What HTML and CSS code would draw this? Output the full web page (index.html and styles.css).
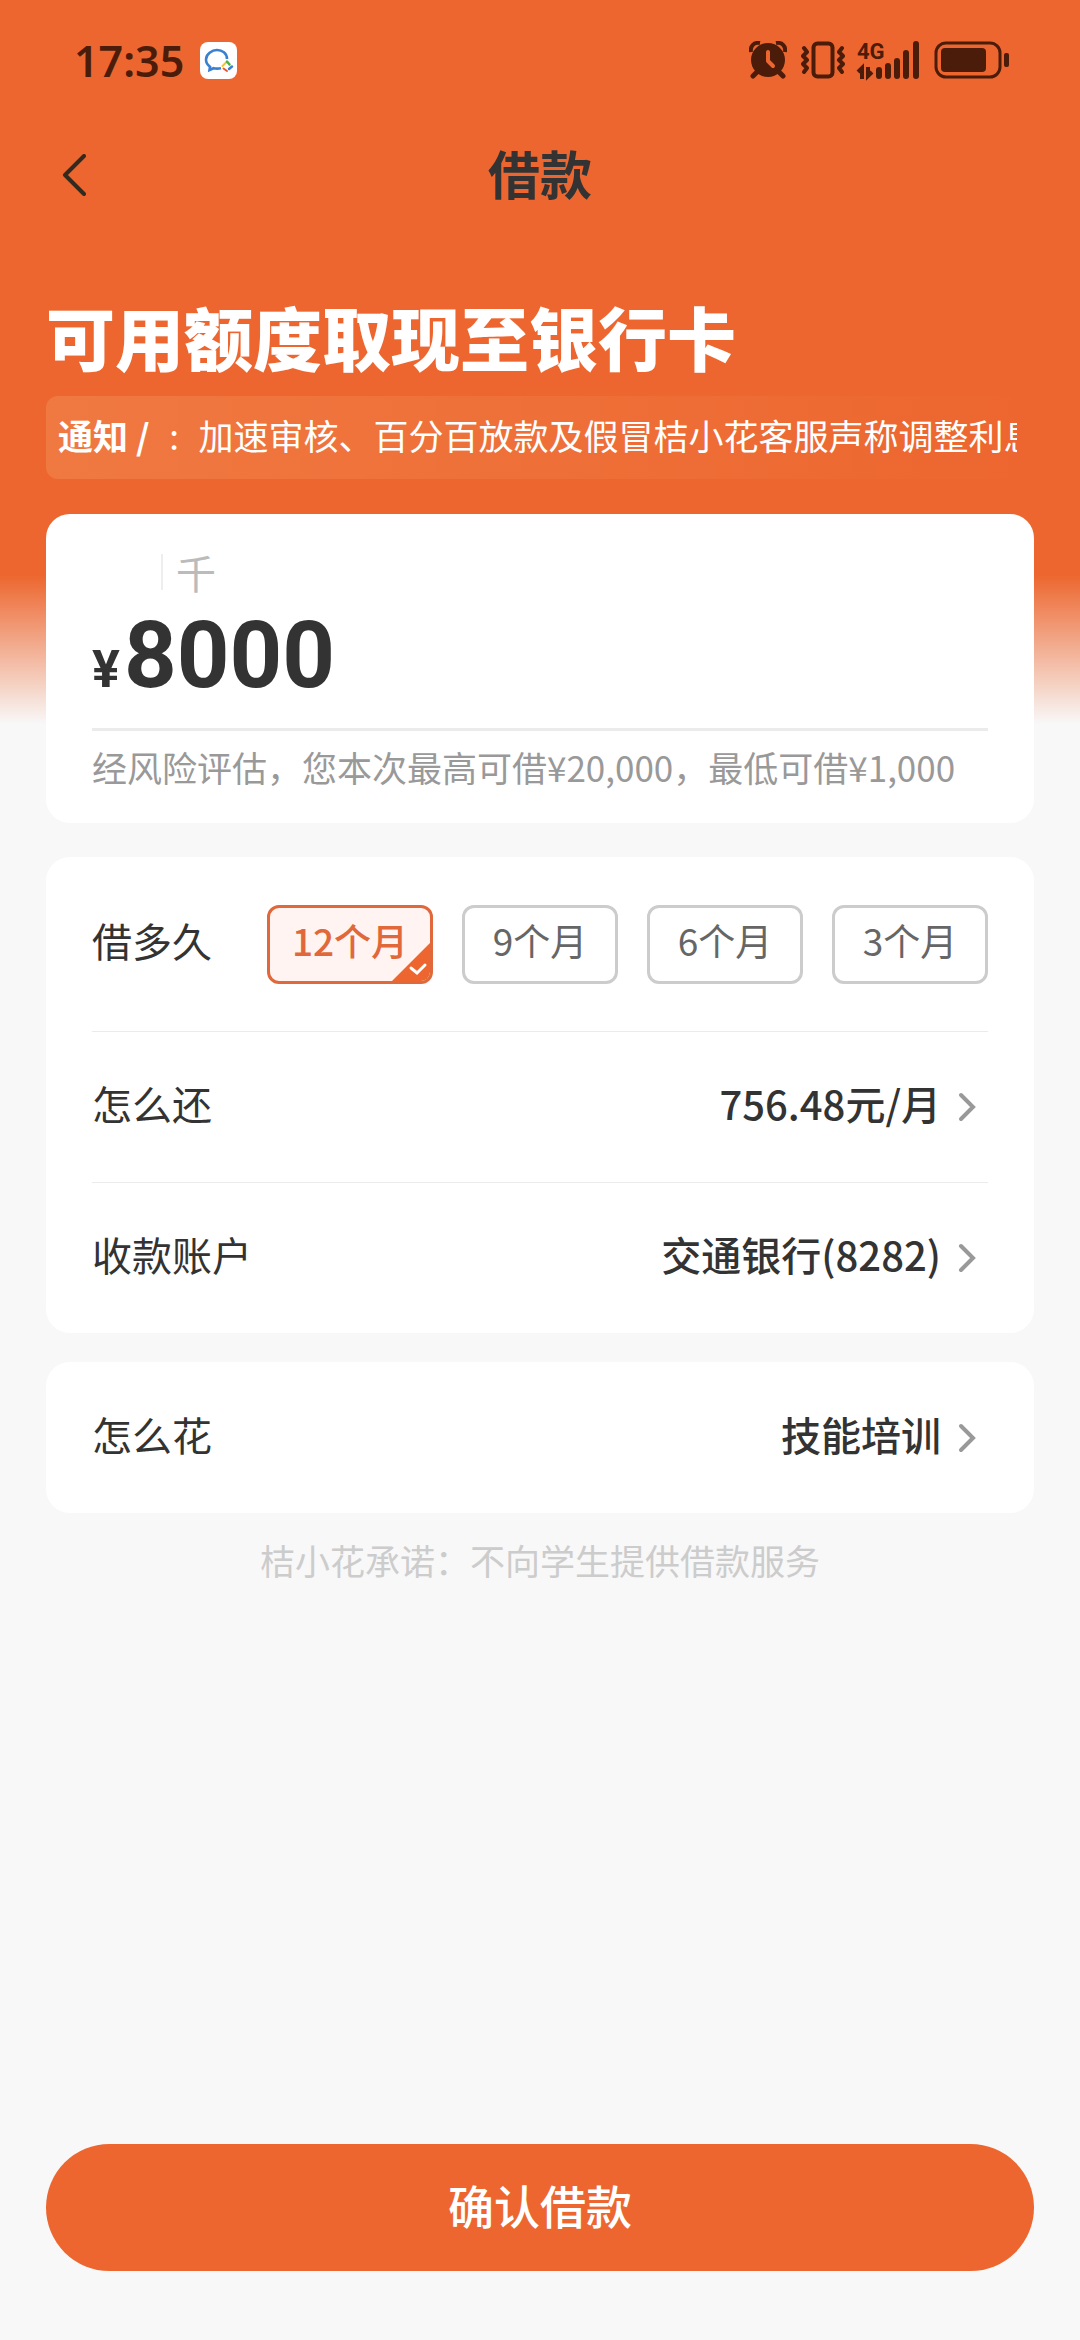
FILE: index.html
```html
<!DOCTYPE html>
<html lang="zh-CN">
<head>
  <meta charset="UTF-8">
  <meta name="viewport" content="width=device-width, initial-scale=1.0">
  <title>借款</title>
  <link rel="stylesheet" href="styles.css">
</head>
<body>

<div class="page">
  <!-- Status bar -->
  <div class="status-bar">
    <span class="status-time">17:35</span>
    <svg class="status-app" width="37" height="37" viewBox="0 0 37 37">
      <rect width="37" height="37" rx="8" fill="#fff"/>
      <path d="M27 17c0-6-5-9-10-9S6 12 6 17.500c0 3 1.500 5.500 4 7.200L9.500 28l4-1.800c2.500.6 5 .5 7.500 0" fill="none" stroke="#3b7fd0" stroke-width="2.600"/>
      <path d="M26 20.500l-3.500 3.500" stroke="#f5c330" stroke-width="2" stroke-linecap="round"/>
      <path d="M27 19.500l2.500 3" stroke="#4fb04a" stroke-width="2.500" stroke-linecap="round"/>
      <path d="M32 24.500l-3 2.500" stroke="#3b7fd0" stroke-width="2.500" stroke-linecap="round"/>
      <path d="M23.500 26.500l3.500 2.500" stroke="#e8592c" stroke-width="2" stroke-linecap="round"/>
    </svg>
    <div class="status-icons">
      <svg width="38" height="38" viewBox="0 0 38 38">
        <circle cx="19" cy="19" r="17" fill="#4c1c0a"/>
        <path d="M2 11C1 5 5 1 11 2M36 11c1-6-3-10-9-9" fill="none" stroke="#4c1c0a" stroke-width="4"/>
        <path d="M8 31l-4 4M30 31l4 4" stroke="#4c1c0a" stroke-width="5" stroke-linecap="round"/>
        <path d="M19 11v9l5 5" fill="none" stroke="#ed662f" stroke-width="4" stroke-linecap="round" stroke-linejoin="round"/>
      </svg>
      <svg width="44" height="38" viewBox="0 0 44 38">
        <rect x="12.500" y="2.500" width="19" height="33" rx="4" fill="none" stroke="#4c1c0a" stroke-width="4"/>
        <path d="M3 7l3 4-4 4 4 4-4 4 4 4-3 4M41 7l-3 4 4 4-4 4 4 4-4 4 3 4" fill="none" stroke="#4c1c0a" stroke-width="4" stroke-linejoin="round" stroke-linecap="round"/>
      </svg>
      <svg class="signal" width="64" height="38" viewBox="0 0 64 38">
        <text x="1" y="18" class="signal-label">4G</text>
        <path d="M2 31l4-4v11M12 26v9l4-4" fill="none" stroke="#4c1c0a" stroke-width="4"/>
        <path d="M23 29v6M32 25v10M41 20v15M50 12v23M60 3v32" stroke="#4c1c0a" stroke-width="6" stroke-linecap="round"/>
      </svg>
      <svg width="76" height="38" viewBox="0 0 76 38">
        <rect x="2" y="2" width="64" height="34" rx="10" fill="none" stroke="#4c1c0a" stroke-width="3"/>
        <rect x="7" y="7" width="45" height="24" rx="4" fill="#4c1c0a"/>
        <rect x="70" y="12" width="5" height="14" rx="2" fill="#4c1c0a"/>
      </svg>
    </div>
  </div>

  <!-- Nav bar -->
  <header class="nav-bar">
    <button type="button" class="nav-back" aria-label="返回">
      <svg width="24" height="42" viewBox="0 0 24 42">
        <path d="M22 2L3 21l19 19" fill="none" stroke="#33291c" stroke-width="4" stroke-linecap="round" stroke-linejoin="round"/>
      </svg>
    </button>
    <h1>借款</h1>
  </header>

  <main class="content">
    <h2 class="slogan">可用额度取现至银行卡</h2>

    <div class="notice">
      <strong>通知 /</strong>
      <span class="notice-colon">:</span>
      <span class="notice-text">加速审核、百分百放款及假冒桔小花客服声称调整利息</span>
    </div>

    <!-- Amount -->
    <section class="card amount-card">
      <div class="amount-unit">千</div>
      <div class="amount-row">
        <label for="amount">¥</label>
        <input type="text" id="amount" inputmode="numeric" value="8000">
      </div>
      <p class="amount-tip">经风险评估，您本次最高可借¥20,000，最低可借¥1,000</p>
    </section>

    <!-- Loan details -->
    <section class="card detail-card">
      <fieldset class="row term-row">
        <legend>借多久</legend>
        <div class="terms">
          <label class="term term-wide">
            <input type="radio" name="term" value="12" checked>
            <span>12个月</span>
            <svg class="term-check" width="38" height="38" viewBox="0 0 38 38">
              <path d="M38 0v38H0z" fill="#ed662f"/>
              <path d="M19 25l6 5 8-8" fill="none" stroke="#fff" stroke-width="3" stroke-linecap="round"/>
            </svg>
          </label>
          <label class="term">
            <input type="radio" name="term" value="9">
            <span>9个月</span>
          </label>
          <label class="term">
            <input type="radio" name="term" value="6">
            <span>6个月</span>
          </label>
          <label class="term">
            <input type="radio" name="term" value="3">
            <span>3个月</span>
          </label>
        </div>
      </fieldset>
      <button type="button" class="row">
        <span>怎么还</span>
        <span class="row-value">756.48元/月</span>
        <svg class="row-arrow" width="18" height="30" viewBox="0 0 18 30">
          <path d="M3 3l12 12L3 27" fill="none" stroke="#999" stroke-width="4" stroke-linecap="round"/>
        </svg>
      </button>
      <button type="button" class="row">
        <span>收款账户</span>
        <span class="row-value">交通银行(8282)</span>
        <svg class="row-arrow" width="18" height="30" viewBox="0 0 18 30">
          <path d="M3 3l12 12L3 27" fill="none" stroke="#999" stroke-width="4" stroke-linecap="round"/>
        </svg>
      </button>
    </section>

    <!-- Purpose -->
    <section class="card">
      <button type="button" class="row">
        <span>怎么花</span>
        <span class="row-value">技能培训</span>
        <svg class="row-arrow" width="18" height="30" viewBox="0 0 18 30">
          <path d="M3 3l12 12L3 27" fill="none" stroke="#999" stroke-width="4" stroke-linecap="round"/>
        </svg>
      </button>
    </section>

    <p class="promise">桔小花承诺：不向学生提供借款服务</p>
  </main>

  <footer class="footer">
    <button type="button" class="btn-primary">确认借款</button>
  </footer>
</div>

</body>
</html>
```
FILE: styles.css
```css
/* Global Styles */
* {
  box-sizing: border-box;
}

body {
  margin: 0;
  font-family: "Noto Sans CJK SC", sans-serif;
  font-size: 40px;
  color: #333333;
}

h1,
h2,
p {
  margin: 0;
}

button,
input {
  font: inherit;
  color: inherit;
  border: none;
  background: none;
  padding: 0;
}

svg {
  display: block;
}

.page {
  display: flex;
  flex-direction: column;
  min-height: 100vh;
  background: #f8f8f8 linear-gradient(#ed662f 575px, #f8f8f8 724px) no-repeat;
}

/* Status Bar */
.status-bar {
  display: flex;
  align-items: center;
  height: 120px;
  padding: 0 70px 0 74px;
  color: #4c1c0a;
}

.status-time {
  font-family: "Noto Sans", sans-serif;
  font-size: 43px;
  font-weight: 600;
}

.status-app {
  margin-left: 16px;
}

.status-icons {
  display: flex;
  gap: 14px;
  margin-left: auto;
}

.signal {
  margin-left: -3px;
  overflow: visible;
}

.signal-label {
  font-family: Roboto, sans-serif;
  font-size: 22px;
  font-weight: 700;
  fill: #4c1c0a;
}

/* Nav Bar */
.nav-bar {
  display: grid;
  grid-template-columns: 1fr auto 1fr;
  align-items: center;
  height: 110px;
  padding: 0 62px;
}

.nav-back {
  justify-self: start;
  cursor: pointer;
}

.nav-bar h1 {
  padding-bottom: 4px;
  font-size: 52px;
  line-height: 60px;
  font-weight: 700;
}

/* Content */
.content {
  flex: 1;
  padding: 67px 46px 0;
}

.slogan {
  font-size: 69px;
  line-height: 78px;
  font-weight: 900;
  color: #ffffff;
}

.notice {
  display: flex;
  align-items: center;
  height: 83px;
  margin: 21px 0 35px;
  padding: 0 17px 6px 12px;
  border-radius: 12px;
  background: linear-gradient(90deg, rgba(255, 220, 160, 0.16), rgba(255, 220, 160, 0));
  color: #ffffff;
  font-size: 35px;
  white-space: nowrap;
}

.notice-colon {
  width: 49px;
  text-align: center;
}

.notice-text {
  flex: 1;
  overflow: hidden;
}

/* Card Style */
.card {
  padding: 0 46px;
  border-radius: 24px;
  background: #ffffff;
}

.amount-card {
  padding-top: 28px;
  padding-bottom: 20px;
  margin-bottom: 34px;
}

.detail-card {
  margin-bottom: 29px;
}

.amount-unit {
  display: flex;
  align-items: center;
  height: 60px;
  margin-left: 69px;
  color: #bbbbbb;
}

.amount-unit::before {
  content: "";
  width: 2px;
  height: 36px;
  margin-right: 13px;
  background: #eeeeee;
}

.amount-row {
  display: flex;
  align-items: baseline;
  gap: 4px;
  height: 129px;
  border-bottom: 3px solid #ebebeb;
  font-family: Roboto, sans-serif;
  font-weight: 700;
}

.amount-row label {
  font-size: 52px;
}

.amount-row input {
  flex: 1;
  min-width: 0;
  height: 107px;
  font-size: 92px;
}

.amount-tip {
  font-size: 35px;
  line-height: 72px;
  color: #999999;
  white-space: nowrap;
}

/* Rows */
.row {
  display: flex;
  align-items: center;
  width: 100%;
  height: 151px;
  text-align: left;
}

.row + .row {
  border-top: 1px solid #ebebeb;
}

.row > span,
.row legend,
.term span {
  padding-bottom: 8px;
}

.row-value {
  margin-left: auto;
  font-weight: 500;
}

.row-arrow {
  margin: 0 12px 0 17px;
}

.term-row {
  height: 174px;
  margin: 0;
  padding: 0;
  border: none;
}

.term-row legend {
  float: left;
  padding: 0 0 8px;
}

.terms {
  display: flex;
  gap: 29px;
  margin-left: auto;
}

.term {
  position: relative;
  display: flex;
  align-items: center;
  justify-content: center;
  width: 156px;
  height: 79px;
  border: 3px solid #cccccc;
  border-radius: 12px;
  overflow: hidden;
  font-size: 37px;
  color: #666666;
  cursor: pointer;
}

.term-wide {
  width: 166px;
}

.term input {
  position: absolute;
  opacity: 0;
}

.term:has(input:checked) {
  border-color: #e0683a;
  background: #fff4f1;
  color: #e0683a;
  font-weight: 500;
}

.term-check {
  position: absolute;
  right: 0;
  bottom: 0;
}

.promise {
  font-size: 35px;
  line-height: 94px;
  text-align: center;
  color: #cccccc;
}

/* Footer */
.footer {
  padding: 0 46px 69px;
}

.btn-primary {
  width: 100%;
  height: 127px;
  padding-bottom: 8px;
  border-radius: 64px;
  background-color: #ed662f;
  color: #ffffff;
  font-size: 46px;
  font-weight: 500;
  cursor: pointer;
}
```
